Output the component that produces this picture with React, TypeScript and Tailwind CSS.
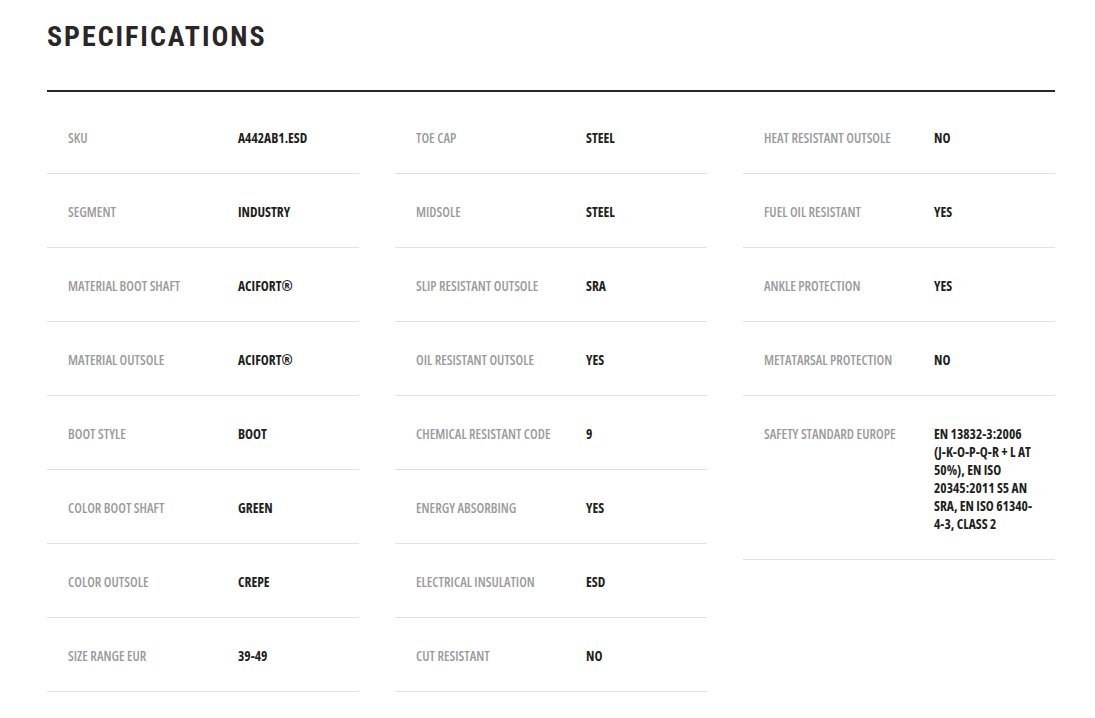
const columns: [string, string][][] = [
  [
    ["SKU", "A442AB1.ESD"],
    ["SEGMENT", "INDUSTRY"],
    ["MATERIAL BOOT SHAFT", "ACIFORT®"],
    ["MATERIAL OUTSOLE", "ACIFORT®"],
    ["BOOT STYLE", "BOOT"],
    ["COLOR BOOT SHAFT", "GREEN"],
    ["COLOR OUTSOLE", "CREPE"],
    ["SIZE RANGE EUR", "39-49"],
  ],
  [
    ["TOE CAP", "STEEL"],
    ["MIDSOLE", "STEEL"],
    ["SLIP RESISTANT OUTSOLE", "SRA"],
    ["OIL RESISTANT OUTSOLE", "YES"],
    ["CHEMICAL RESISTANT CODE", "9"],
    ["ENERGY ABSORBING", "YES"],
    ["ELECTRICAL INSULATION", "ESD"],
    ["CUT RESISTANT", "NO"],
  ],
  [
    ["HEAT RESISTANT OUTSOLE", "NO"],
    ["FUEL OIL RESISTANT", "YES"],
    ["ANKLE PROTECTION", "YES"],
    ["METATARSAL PROTECTION", "NO"],
    [
      "SAFETY STANDARD EUROPE",
      "EN 13832-3:2006 (J-K-O-P-Q-R + L AT 50%), EN ISO 20345:2011 S5 AN SRA, EN ISO 61340-4-3, CLASS 2",
    ],
  ],
];

export default function App() {
  return (
    <div className="min-h-screen bg-white pl-[47px] pr-[40px] pt-[20px]">
      <h2 className="font-['Roboto_Condensed',sans-serif] text-[28px] font-bold leading-[34px] tracking-[0.07em] text-[#2a2628]">
        SPECIFICATIONS
      </h2>
      <div className="mt-[36px] h-[2px] bg-[#25272d]" />
      <div className="mt-[8px] grid grid-cols-3 gap-x-[36px] font-['Open_Sans',sans-serif] [font-stretch:75%]">
        {columns.map((rows, ci) => (
          <div key={ci}>
            {rows.map(([label, value]) => (
              <div
                key={label}
                className="flex border-b border-[#e2e2e2] pl-[21px] pt-[29px] pb-[26px] text-[13.5px] leading-[18px]"
              >
                <div className="w-[170px] shrink-0 font-semibold text-[#9b9b9b]">{label}</div>
                <div className="w-[100px] font-bold text-[#1f1f22]">{value}</div>
              </div>
            ))}
          </div>
        ))}
      </div>
    </div>
  );
}
